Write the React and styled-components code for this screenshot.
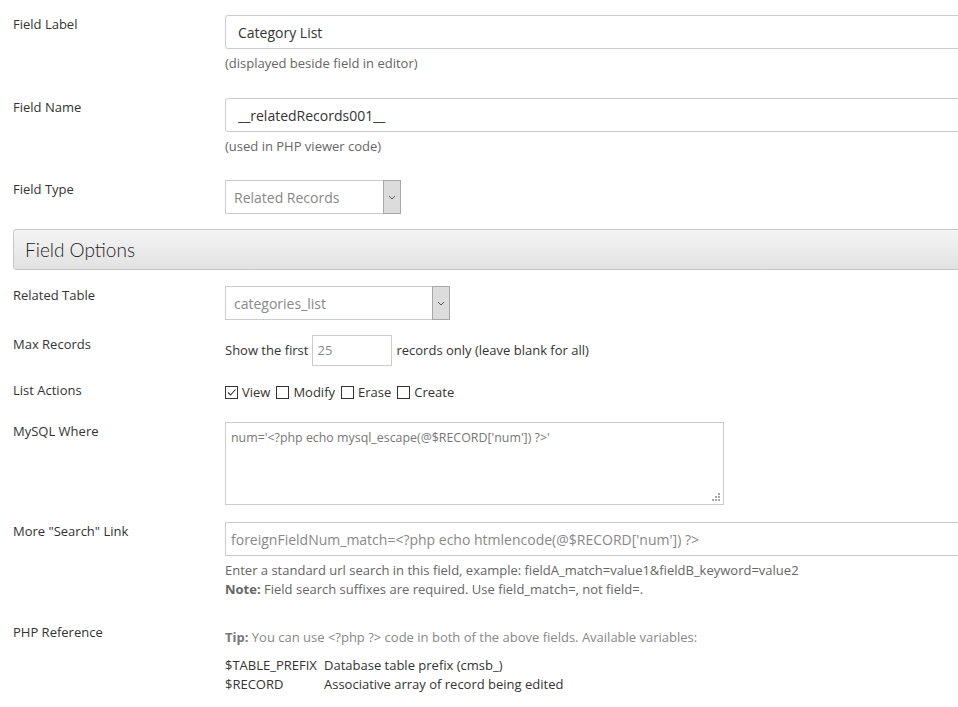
import React from 'react';
import styled, { createGlobalStyle } from 'styled-components';

const GlobalStyle = createGlobalStyle`
  html, body {
    margin: 0;
    padding: 0;
    background: #fff;
    overflow: hidden;
  }
  body {
    font-family: "Open Sans", "Liberation Sans", sans-serif;
    font-size: 13px;
    color: #333;
  }
`;

const App = () => {
  return (
    <Page>
      <GlobalStyle />
      <Row $gap={26}>
        <Label>Field Label</Label>
        <Control>
          <TextInput value="Category List" $pad={12} readOnly />
          <Hint>(displayed beside field in editor)</Hint>
        </Control>
      </Row>
      <Row $gap={25}>
        <Label>Field Name</Label>
        <Control>
          <TextInput value="__relatedRecords001__" $pad={12} readOnly />
          <Hint>(used in PHP viewer code)</Hint>
        </Control>
      </Row>
      <Row $gap={15}>
        <Label>Field Type</Label>
        <Control>
          <Select $width={176}>
            <SelectValue>Related Records</SelectValue>
            <SelectArrow>
              <svg width="8" height="5" viewBox="0 0 8 5">
                <path d="M1 1 L4 4 L7 1" fill="none" stroke="#555" strokeWidth="1" />
              </svg>
            </SelectArrow>
          </Select>
        </Control>
      </Row>

      <SectionHeader>Field Options</SectionHeader>

      <Row $gap={15}>
        <Label>Related Table</Label>
        <Control>
          <Select $width={225}>
            <SelectValue>categories_list</SelectValue>
            <SelectArrow>
              <svg width="8" height="5" viewBox="0 0 8 5">
                <path d="M1 1 L4 4 L7 1" fill="none" stroke="#555" strokeWidth="1" />
              </svg>
            </SelectArrow>
          </Select>
        </Control>
      </Row>
      <Row $gap={16}>
        <Label>Max Records</Label>
        <InlineControl>
          Show the first
          <SmallInput value="25" readOnly />
          records only (leave blank for all)
        </InlineControl>
      </Row>
      <Row $gap={19}>
        <Label>List Actions</Label>
        <Checks>
          <Check checked label="View" />
          <Check label="Modify" />
          <Check label="Erase" />
          <Check label="Create" />
        </Checks>
      </Row>
      <Row $gap={17}>
        <Label>MySQL Where</Label>
        <Control>
          <TextAreaBox>
            num='&lt;?php echo mysql_escape(@$RECORD['num']) ?&gt;'
            <Grip>
              <svg width="8" height="8" viewBox="0 0 8 8">
                <rect x="6" y="0" width="2" height="2" fill="#aaa" />
                <rect x="3" y="3" width="2" height="2" fill="#aaa" />
                <rect x="6" y="3" width="2" height="2" fill="#aaa" />
                <rect x="0" y="6" width="2" height="2" fill="#aaa" />
                <rect x="3" y="6" width="2" height="2" fill="#aaa" />
                <rect x="6" y="6" width="2" height="2" fill="#aaa" />
              </svg>
            </Grip>
          </TextAreaBox>
        </Control>
      </Row>
      <Row $gap={24}>
        <Label>More "Search" Link</Label>
        <Control>
          <TextInput
            value="foreignFieldNum_match=<?php echo htmlencode(@$RECORD['num']) ?>"
            $pad={5}
            $muted
            $square
            readOnly
          />
          <HintBlock>
            Enter a standard url search in this field, example: fieldA_match=value1&amp;fieldB_keyword=value2
            <br />
            <b>Note:</b> Field search suffixes are required. Use field_match=, not field=.
          </HintBlock>
        </Control>
      </Row>
      <Row $gap={0}>
        <Label>PHP Reference</Label>
        <RefBlock>
          <Tip>
            <b>Tip:</b> You can use &lt;?php ?&gt; code in both of the above fields. Available variables:
          </Tip>
          <VarTable>
            <VarName>$TABLE_PREFIX</VarName>
            <span>Database table prefix (cmsb_)</span>
            <VarName>$RECORD</VarName>
            <span>Associative array of record being edited</span>
          </VarTable>
        </RefBlock>
      </Row>
    </Page>
  );
};

const Check = ({ checked, label }) => (
  <CheckItem>
    <Box>
      {checked && (
        <svg width="11" height="11" viewBox="0 0 11 11">
          <path d="M2 5.5 L4.5 8 L9.5 2.5" fill="none" stroke="#333" strokeWidth="1.1" />
        </svg>
      )}
    </Box>
    {label}
  </CheckItem>
);

const Page = styled.div`
  padding: 15px 0 0 13px;
  width: 1100px;
`;

const Row = styled.div`
  display: grid;
  grid-template-columns: 212px 1fr;
  align-items: start;
  margin-bottom: ${(p) => p.$gap}px;
`;

const Label = styled.div`
  font-size: 13px;
  line-height: 18px;
  color: #333;
`;

const Control = styled.div`
  display: flex;
  flex-direction: column;
  align-items: flex-start;
`;

const TextInput = styled.input`
  box-sizing: border-box;
  width: 760px;
  height: 34px;
  padding: 0 ${(p) => p.$pad}px;
  border: 1px solid #ccc;
  border-radius: ${(p) => (p.$square ? '0' : '3px')};
  font-family: "Open Sans", "Liberation Sans", sans-serif;
  font-size: 14px;
  color: ${(p) => (p.$muted ? '#888' : '#333')};
  background: #fff;
  outline: none;
`;

const Hint = styled.div`
  margin-top: 5px;
  font-size: 13px;
  line-height: 18px;
  color: #666;
`;

const HintBlock = styled.div`
  margin-top: 5px;
  font-size: 13px;
  line-height: 19px;
  color: #666;

  b {
    font-weight: 700;
  }
`;

const Select = styled.div`
  box-sizing: border-box;
  width: ${(p) => p.$width}px;
  height: 34px;
  display: flex;
  align-items: stretch;
  border: 1px solid #ccc;
  background: #fff;
`;

const SelectValue = styled.div`
  flex: 1;
  display: flex;
  align-items: center;
  padding-left: 8px;
  font-size: 14px;
  color: #888;
`;

const SelectArrow = styled.div`
  width: 16px;
  display: flex;
  align-items: center;
  justify-content: center;
  background: #dcdcdc;
  border: 1px solid #a8a8a8;
  margin: -1px -1px -1px 0;
`;

const SectionHeader = styled.div`
  box-sizing: border-box;
  height: 41px;
  margin-bottom: 16px;
  padding-left: 11px;
  display: flex;
  align-items: center;
  border: 1px solid #c8c8c8;
  border-radius: 3px 0 0 3px;
  background: linear-gradient(#f4f4f4, #e2e2e2);
  font-family: "Lato", "Open Sans", sans-serif;
  font-weight: 300;
  font-size: 19px;
  color: #1e1e1e;
`;

const InlineControl = styled.div`
  display: flex;
  align-items: center;
  gap: 4px;
  height: 30px;
  font-size: 13px;
  color: #333;
`;

const SmallInput = styled.input`
  box-sizing: border-box;
  width: 80px;
  height: 31px;
  padding: 0 4px;
  border: 1px solid #ccc;
  font-family: "Open Sans", "Liberation Sans", sans-serif;
  font-size: 13px;
  color: #888;
  outline: none;
`;

const Checks = styled.div`
  display: flex;
  align-items: center;
  height: 22px;
  gap: 6px;
  font-size: 13px;
  color: #333;
`;

const CheckItem = styled.label`
  display: flex;
  align-items: center;
  gap: 4px;
`;

const Box = styled.span`
  box-sizing: border-box;
  width: 13px;
  height: 13px;
  border: 1px solid #333;
  display: flex;
  align-items: center;
  justify-content: center;
`;

const TextAreaBox = styled.div`
  position: relative;
  box-sizing: border-box;
  width: 499px;
  height: 83px;
  padding: 5px 5px;
  border: 1px solid #ccc;
  font-size: 12.4px;
  line-height: 20px;
  color: #777;
`;

const Grip = styled.div`
  position: absolute;
  right: 3px;
  bottom: 3px;
  line-height: 0;
`;

const RefBlock = styled.div`
  padding-top: 5px;
  font-size: 13px;
  color: #333;
`;

const Tip = styled.div`
  line-height: 18px;
  color: #888;

  b {
    color: #777;
    font-weight: 700;
  }
`;

const VarTable = styled.div`
  margin-top: 10px;
  display: grid;
  grid-template-columns: 99px auto;
  line-height: 19px;
  color: #333;
`;

const VarName = styled.span``;

export default App;
